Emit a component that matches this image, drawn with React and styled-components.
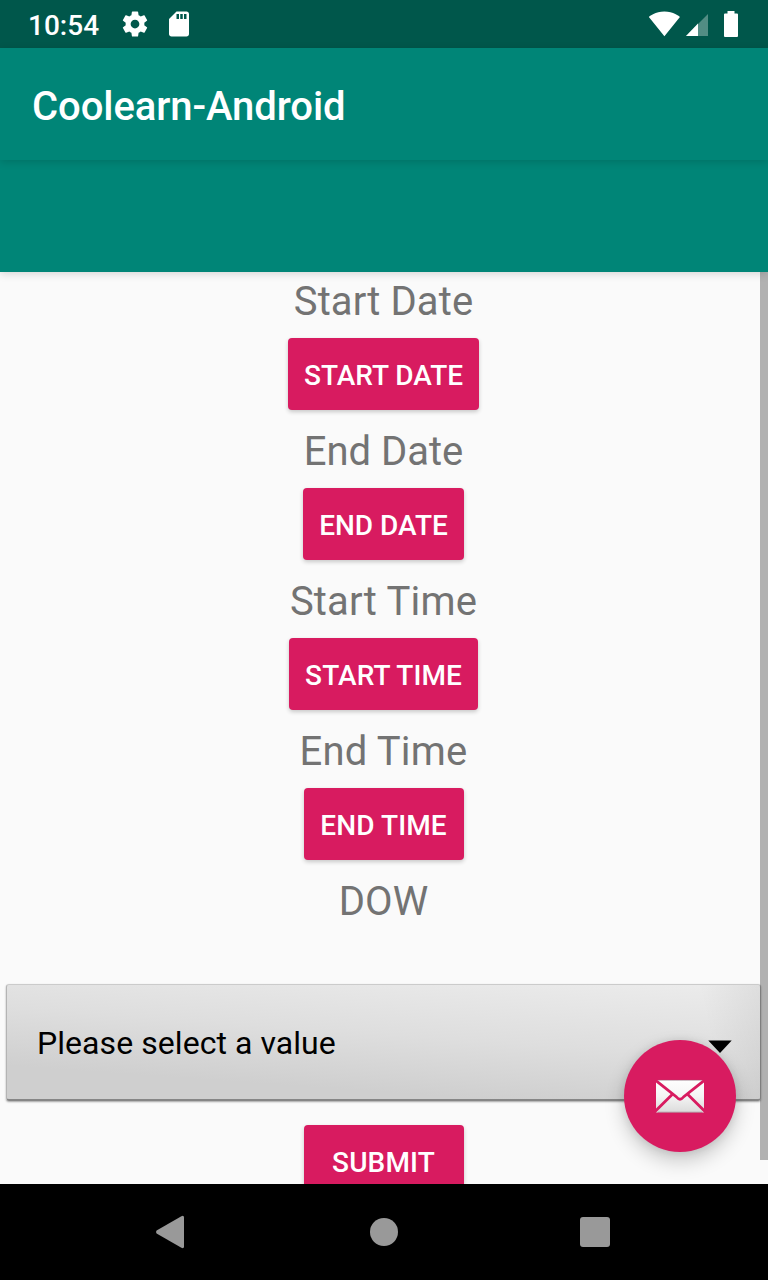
import React from "react";
import styled, { createGlobalStyle } from "styled-components";

const GlobalStyle = createGlobalStyle`
  *, *::before, *::after { box-sizing: border-box; }
  html, body { margin: 0; padding: 0; }
  body { font-family: Roboto, "Noto Sans", sans-serif; background: #fafafa; }
`;

const Screen = styled.div`
  position: relative;
  display: flex;
  flex-direction: column;
  width: 768px;
  height: 1280px;
  overflow: hidden;
  background: #fafafa;
`;

const StatusBar = styled.header`
  display: flex;
  align-items: flex-start;
  justify-content: space-between;
  flex: none;
  height: 48px;
  padding: 0 30px 0 28px;
  background: #00574b;
  color: #fff;
`;

const StatusGroup = styled.div`
  display: flex;
  align-items: center;
  height: 48px;
  gap: ${(p) => p.$gap}px;
`;

const Clock = styled.time`
  width: 78px;
  font-size: 28px;
  font-weight: 500;
  line-height: 48px;
  padding-top: 3px;
  white-space: nowrap;
`;

const Icon = styled.svg`
  display: block;
  flex: none;
`;

const AppBar = styled.div`
  position: relative;
  z-index: ${(p) => p.$layer};
  display: flex;
  align-items: center;
  flex: none;
  height: 112px;
  padding: 6px 32px 0;
  background: #008577;
  box-shadow: 0 2px 8px rgba(0, 0, 0, 0.15);
`;

const Title = styled.h1`
  margin: 0;
  font-size: 40px;
  font-weight: 500;
  line-height: 48px;
  letter-spacing: -0.08px;
  color: #fff;
  white-space: nowrap;
`;

const Content = styled.main`
  display: flex;
  flex: 1;
  min-height: 0;
  overflow: hidden;
`;

const Form = styled.div`
  display: flex;
  flex-direction: column;
  align-items: center;
  width: 768px;
  padding-right: 1px;
  flex: none;
`;

const Label = styled.div`
  flex: none;
  height: 54px;
  padding-top: 3px;
  font-size: 40px;
  line-height: 54px;
  letter-spacing: ${(p) => p.$tracking || 0}px;
  color: #737373;
  white-space: nowrap;
`;

const Button = styled.button`
  flex: none;
  width: ${(p) => p.$width}px;
  height: 72px;
  margin: 12px 0;
  padding: 3px 0 0;
  border: 0;
  border-radius: 4px;
  background: #d81b60;
  color: #fff;
  font: 500 28px/69px Roboto, "Noto Sans", sans-serif;
  letter-spacing: ${(p) => p.$tracking || 0}px;
  text-align: center;
  white-space: nowrap;
  box-shadow: 0 2px 4px rgba(0, 0, 0, 0.2);
`;

const Spinner = styled.div`
  display: flex;
  align-items: center;
  justify-content: space-between;
  flex: none;
  width: 755px;
  height: 117px;
  margin: 58px 0 12px;
  padding: 2px 28px 0 30px;
  border: 1px solid #b4b4b4;
  border-top-color: #cbcbcb;
  border-bottom: 2px solid #868686;
  border-radius: 3px;
  background:
    linear-gradient(258deg, rgba(0, 0, 0, 0.06), transparent 60px),
    linear-gradient(184deg, #ececec 0%, #dedede 45%, #cfcfcf 80%, #cfcfcf 100%);
  box-shadow: 0 1px 2px rgba(0, 0, 0, 0.35);
  font-size: 32px;
  letter-spacing: 0.06px;
  color: #000;
`;

const Caret = styled(Icon)`
  margin-top: 7px;
`;

const ScrollThumb = styled.div`
  position: absolute;
  top: 272px;
  right: 0;
  width: 8px;
  height: 888px;
  background: rgba(0, 0, 0, 0.29);
`;

const Fab = styled.button`
  position: absolute;
  right: 32px;
  bottom: 128px;
  display: flex;
  align-items: center;
  justify-content: center;
  width: 112px;
  height: 112px;
  padding: 0;
  border: 0;
  border-radius: 50%;
  background: #d81b60;
  box-shadow: 0 9px 20px rgba(0, 0, 0, 0.2), 0 1px 8px rgba(0, 0, 0, 0.1);
`;

const NavBar = styled.nav`
  position: relative;
  z-index: 3;
  display: flex;
  align-items: center;
  justify-content: space-between;
  flex: none;
  height: 96px;
  padding: 0 157px 0 155px;
  background: #000;
`;

const fields = [
  { label: "Start Date", action: "START DATE", width: 191, labelTracking: 0.1, tracking: 0 },
  { label: "End Date", action: "END DATE", width: 161, labelTracking: 0, tracking: 0 },
  { label: "Start Time", action: "START TIME", width: 189, labelTracking: 0.2, tracking: 0.08 },
  { label: "End Time", action: "END TIME", width: 160, labelTracking: 0.17, tracking: 0.12 },
];

const GearIcon = () => (
  <Icon width="30" height="30" viewBox="0 0 24 24" fill="#fff">
    <path d="M19.43 12.98c.04-.32.07-.64.07-.98s-.03-.66-.07-.98l2.11-1.65c.19-.15.24-.42.12-.64l-2-3.46c-.12-.22-.39-.3-.61-.22l-2.49 1c-.52-.4-1.08-.73-1.69-.98l-.38-2.65C14.46 2.18 14.25 2 14 2h-4c-.25 0-.46.18-.49.42l-.38 2.65c-.61.25-1.17.59-1.69.98l-2.49-1c-.23-.09-.49 0-.61.22l-2 3.46c-.13.22-.07.49.12.64l2.11 1.65c-.04.32-.07.65-.07.98s.03.66.07.98l-2.11 1.65c-.19.15-.24.42-.12.64l2 3.46c.12.22.39.3.61.22l2.49-1c.52.4 1.08.73 1.69.98l.38 2.65c.03.24.24.42.49.42h4c.25 0 .46-.18.49-.42l.38-2.65c.61-.25 1.17-.59 1.69-.98l2.49 1c.23.09.49 0 .61-.22l2-3.46c.12-.22.07-.49-.12-.64l-2.11-1.65zM12 15.5c-1.93 0-3.5-1.57-3.5-3.5s1.57-3.5 3.5-3.5 3.5 1.57 3.5 3.5-1.57 3.5-3.5 3.5z" />
  </Icon>
);

const SdCardIcon = () => (
  <Icon width="30" height="30" viewBox="0 0 24 24" fill="#fff">
    <path d="M18 2h-8L4.02 8 4 20c0 1.1.9 2 2 2h12c1.1 0 2-.9 2-2V4c0-1.1-.9-2-2-2zm-6 6h-2V4h2v4zm3 0h-2V4h2v4zm3 0h-2V4h2v4z" />
  </Icon>
);

const WifiIcon = () => (
  <Icon width="32" height="32" viewBox="-0.3 0.3 24 24" fill="#fff">
    <path d="M12.01 21.49L23.64 7c-.45-.34-4.93-4-11.64-4C5.28 3 .81 6.66.36 7l11.63 14.49.01.01.01-.01z" />
  </Icon>
);

const SignalIcon = () => (
  <Icon width="22" height="48" viewBox="0 0 22 48">
    <path d="M0 36L22 14V36Z" fill="#fff" fillOpacity="0.32" />
    <path d="M0 36L12 23.4V36Z" fill="#fff" />
  </Icon>
);

const BatteryIcon = () => (
  <Icon width="14" height="48" viewBox="0 0 14 48" fill="#fff">
    <path d="M3.5 11H10.5V13.4H13A1 1 0 0 1 14 14.4V36A1 1 0 0 1 13 37H1A1 1 0 0 1 0 36V14.4A1 1 0 0 1 1 13.4H3.5Z" />
  </Icon>
);

const SignalGroup = styled(StatusGroup)`
  margin-left: 6px;
`;

const MailIcon = () => (
  <Icon width="48" height="34" viewBox="0 0 48 34">
    <defs>
      <linearGradient id="paper" x1="0" y1="0" x2="0" y2="34" gradientUnits="userSpaceOnUse">
        <stop offset="0" stopColor="#fff" />
        <stop offset="0.5" stopColor="#f5f5f5" />
        <stop offset="1" stopColor="#dadada" />
      </linearGradient>
    </defs>
    <rect y="1" width="48" height="32.5" fill="url(#paper)" />
    <path d="M2 1.3H46M2 33.2H46" stroke="#8e6675" strokeOpacity="0.5" />
    <g fill="none" stroke="#d81b60" strokeWidth="2.8">
      <path d="M-1 .8L20.5 18Q24 22.5 27.5 18L49 .8" />
      <path d="M16.2 15.5L-1 32.5M31.8 15.5L49 32.5" />
    </g>
  </Icon>
);

export default function App() {
  return (
    <>
      <GlobalStyle />
      <Screen>
        <StatusBar>
          <StatusGroup $gap={14}>
            <Clock>10:54</Clock>
            <GearIcon />
            <SdCardIcon />
          </StatusGroup>
          <StatusGroup $gap={0}>
            <WifiIcon />
            <SignalGroup $gap={16}>
              <SignalIcon />
              <BatteryIcon />
            </SignalGroup>
          </StatusGroup>
        </StatusBar>
        <AppBar $layer={2}>
          <Title>Coolearn-Android</Title>
        </AppBar>
        <AppBar $layer={1} />
        <Content>
          <Form>
            {fields.map(({ label, action, width, labelTracking, tracking }) => (
              <React.Fragment key={label}>
                <Label $tracking={labelTracking}>{label}</Label>
                <Button $width={width} $tracking={tracking}>{action}</Button>
              </React.Fragment>
            ))}
            <Label>DOW</Label>
            <Spinner>
              Please select a value
              <Caret width="24" height="14" viewBox="0 0 24 14">
                <path d="M.3 .5H23.7L12 13Z" fill="#000" />
              </Caret>
            </Spinner>
            <Button $width={160} $tracking={0.15}>SUBMIT</Button>
          </Form>
        </Content>
        <NavBar>
          <Icon width="30" height="34" viewBox="0 0 30 34" fill="#999">
            <path d="M1.6 15.6L26.4 1.2Q29 0 29 2.4V31.6Q29 34 26.4 32.8L1.6 18.4Q.4 17 1.6 15.6Z" />
          </Icon>
          <Icon width="32" height="28" viewBox="-4 0 32 28" fill="#999">
            <circle cx="14" cy="14" r="14" />
          </Icon>
          <Icon width="32" height="32" viewBox="0 0 32 32" fill="#999">
            <rect x="1" y="1" width="30" height="30" rx="3" />
          </Icon>
        </NavBar>
        <ScrollThumb />
        <Fab aria-label="Mail">
          <MailIcon />
        </Fab>
      </Screen>
    </>
  );
}
